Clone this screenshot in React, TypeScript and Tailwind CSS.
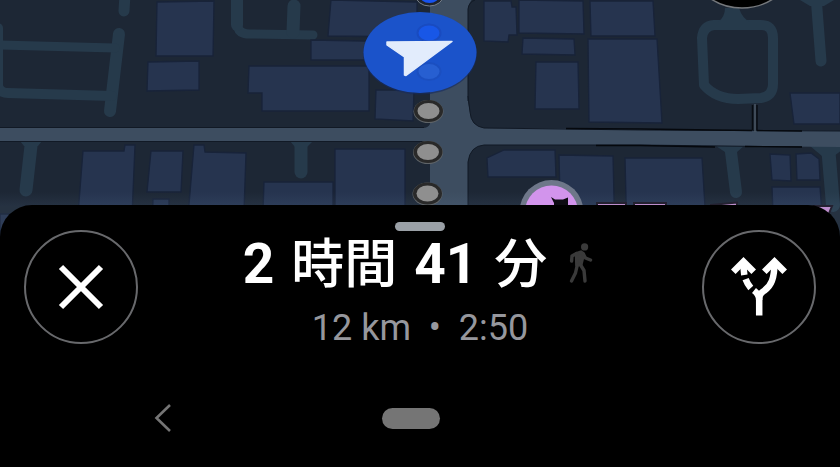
const buildings = [
    '157,2 214,1 213,56 156,56',
    '148,62 199,61 199,90 147,91',
    '83,151 124,151 125,145 135,145 131,240 76,240',
    '151,151 183,151 181,192 147,192',
    '153,199 169,199 169,240 152,240',
    '194,145 204,145 205,152 246,153 243,240 186,240',
    '0,214 40,214 40,240 0,240',
    '264,182 333,182 333,240 262,240',
    '335,149 405,149 405,240 335,240',
    '249,66 369,66 369,111 262,111 262,93 248,93',
    '331,0 417,2 417,37 328,36',
    '311,40 417,42 417,60 311,60',
    '376,90 414,90 413,121 375,119',
    '484,1 511,1 512,7 516,7 517,35 509,35 508,42 484,41',
    '519,0 583,1 584,34 519,33',
    '523,38 574,39 575,55 522,54',
    '536,62 578,62 579,109 535,109',
    '590,1 653,1 655,36 591,36',
    '588,39 657,39 662,123 589,122',
    '487,158 504,150 555,150 556,177 488,177',
    '559,155 613,156 615,240 561,240',
    '625,158 702,158 707,240 627,240',
    '790,93 840,93 840,124 794,124',
    '770,154 790,155 791,181 772,180',
    '796,154 811,153 819,159 820,180 797,180',
    '772,187 820,187 824,240 774,240',
];

const stops = [
    { cx: 428.5, cy: 111 },
    { cx: 428, cy: 152 },
    { cx: 427.5, cy: 193.5 },
];

function MapView() {
    return (
        <svg
            viewBox="0 0 840 240"
            preserveAspectRatio="xMidYMin slice"
            className="block h-[240px] w-full bg-[#1d2735]"
            role="img"
            aria-label="地図"
        >
            <defs>
                <linearGradient id="haze" x1="0" y1="0" x2="0" y2="1">
                    <stop offset="0" stopColor="#7390b5" stopOpacity="0" />
                    <stop offset="1" stopColor="#7390b5" stopOpacity="0.1" />
                </linearGradient>
            </defs>

            {/* minor roads */}
            <g fill="none" stroke="#263a4b" strokeWidth="11" strokeLinecap="round" strokeLinejoin="round">
                <path d="M125 -6 L124 11" />
                <path d="M119 34 L110 111" strokeWidth="12" />
                <path d="M-2 45 L115 48" strokeWidth="9" />
                <path d="M-2 28 L-2 86 Q0 93 8 93 L112 96" strokeWidth="10" />
                <path d="M32 137 L26 190" strokeWidth="13" />
                <path d="M238 -6 V27 Q239 34 250 34 L313 35" strokeWidth="9" />
                <path d="M237 -6 V25" strokeWidth="12" />
                <path d="M294 6 L293 32" strokeWidth="13" />
                <path d="M301 138 V172" strokeWidth="13" />
                <path d="M714 25 H761 Q773 25 773 38 L773 84 Q773 96 761 98 L738 99 Q716 99 704 85 L702 38 Q703 26 714 25 Z" strokeWidth="10" />
                <path d="M816 -4 L821 61" />
                <path d="M730 144 L736 192" strokeWidth="12" />
                <path d="M828 146 L833 205" strokeWidth="14" />
            </g>
            <path d="M725 8 H739 Q742 18 750 22 H718 Q725 17 725 8 Z" fill="#263a4b" />
            <path d="M20 141 H42 L38 146 H24 Z M290 141 H313 L307 147 H295 Z M716 146 H744 L737 152 H725 Z M810 146 H842 V150 L834 156 H822 Z M800 0 H834 L824 6 H810 Z" fill="#263a4b" />

            {/* main roads */}
            <path
                d="M430 -5 V124 Q428 128 423 128 H0 V141 H424 Q430 142 430 147 V240 H468 V161 Q471 146 484 145 L600 145 L840 147 V131 L640 129 L484 128 Q471 126 470 112 L468 102 V9 Q468 3 476 -5 Z"
                fill="#3d4d60"
            />
            <path
                d="M0 127.5 H424 M0 141.5 H424 M468 101 V9 Q469 2 475 0 M468 96 L470 112 Q471 126 484 128 L640 130 L840 131 M468 240 V162 Q470 146 484 145 L640 145 L802 147"
                fill="none"
                stroke="#111925"
                strokeWidth="1"
            />
            <path d="M566 128.5 L640 129 L752 130.5 M757 130.5 L802 131 M596 145.5 H640 L715 147 M745 146.5 L802 147" fill="none" stroke="#05080d" strokeWidth="1.3" />
            <path d="M752.5 105 V130 M757 105 V130" stroke="#080c12" strokeWidth="1.5" />
            <path d="M755 104 V132" stroke="#4b5866" strokeWidth="1.5" />

            <g fill="#26344f" stroke="#182339" strokeWidth="1.3">
                {buildings.map((points) => (
                    <polygon key={points} points={points} />
                ))}
            </g>

            <rect x="0" y="192" width="840" height="14" fill="url(#haze)" />
            <rect x="0" y="206" width="840" height="34" fill="#7390b5" opacity="0.1" />

            {/* shops along the street */}
            <g fill="#bd8dcc" stroke="#242130" strokeWidth="2">
                <path d="M597 203 H626 V240 H597 Z" />
                <path d="M634 203 H666 V240 H634 Z" />
                <path d="M711 205 L737 202.5 V240 H711 Z" />
                <path d="M815 206 H832 L828 216 Z" />
            </g>
            <circle cx="551.5" cy="212" r="32" fill="#6e7789" />
            <circle cx="551.5" cy="212" r="26.5" fill="#d294ec" />
            <path d="M551 197 L555 199.5 H563 L568 197.5 V240 H554 V203 Z" fill="#0d0b12" />

            {/* route dots */}
            {stops.map((stop) => (
                <g key={stop.cy}>
                    <ellipse cx={stop.cx} cy={stop.cy + 0.6} rx="15" ry="11.5" fill="#5f6468" />
                    <ellipse cx={stop.cx} cy={stop.cy} rx="14.5" ry="11" fill="#292929" />
                    <ellipse cx={stop.cx} cy={stop.cy} rx="11" ry="8" fill="#8f8f8f" />
                </g>
            ))}
            <ellipse cx="429.5" cy="-5" rx="14" ry="11" fill="#20242d" stroke="#78818b" strokeWidth="1" />
            <ellipse cx="429.5" cy="-5" rx="10" ry="8" fill="#1753ef" />

            <ellipse cx="420" cy="53.5" rx="57" ry="41" fill="#152b60" opacity="0.6" />
            <ellipse cx="420" cy="52.5" rx="56.5" ry="40.5" fill="#1b53ca" />
            <ellipse cx="429" cy="33" rx="11.5" ry="8.5" fill="#1857e7" stroke="#194bc0" strokeWidth="2" />
            <ellipse cx="429" cy="71.5" rx="11.5" ry="8.5" fill="#275fd1" stroke="#1b4fc0" strokeWidth="2" />
            <path
                d="M387 42 L452 41.5 L406 75.5 L404.5 75 L404.5 57 L387 45 Z"
                fill="#e2ecfc"
                stroke="#e2ecfc"
                strokeWidth="1.5"
                strokeLinejoin="round"
            />

            <circle cx="742" cy="-49" r="57" fill="#000" stroke="#75787c" strokeWidth="1.5" />
        </svg>
    );
}

function CloseIcon() {
    return (
        <svg viewBox="0 0 48 48" className="h-12 w-12" fill="none" stroke="currentColor" strokeWidth="6" aria-hidden="true">
            <path d="M4 4 L44 44 M44 4 L4 44" />
        </svg>
    );
}

function RoutesIcon() {
    return (
        <svg viewBox="0 0 60 64" className="h-16 w-[60px]" fill="none" stroke="currentColor" strokeWidth="6.5" aria-hidden="true">
            <path d="M30.2 60.5 V44 Q30.2 38.5 35.5 35.5 C42 31 45.5 24 45.5 7" />
            <path d="M35.3 16.7 L45.5 6.5 L55.7 16.7" />
            <path d="M4.3 16.7 L14.5 6.5 L24.7 16.7" />
            <path d="M14.5 7 Q14.5 14 15.3 20" />
            <path d="M16.6 24.2 Q18.3 29 21.8 33" />
            <path d="M25 35.5 Q30.2 39.5 30.2 45" />
        </svg>
    );
}

function WalkIcon() {
    return (
        <svg viewBox="0 0 30 44" className="h-11 w-[30px] text-[#3a3a3a]" fill="none" stroke="currentColor" strokeWidth="3.4" strokeLinecap="round" strokeLinejoin="round" aria-hidden="true">
            <circle cx="17.6" cy="3.9" r="3.6" fill="currentColor" stroke="none" />
            <path d="M9.5 10.5 L14 9 L16.5 11 L14 21 L9.8 22 Z" fill="currentColor" />
            <path d="M9.5 10.5 L5 13 L4.6 18" />
            <path d="M16 10.5 L18.5 15 L23.5 17" />
            <path d="M10.3 22 L8.5 30 L4.5 38" />
            <path d="M13 21 L17 27.5 L18 38" />
        </svg>
    );
}

const roundButton =
    'mt-2 flex h-[114px] w-[114px] shrink-0 items-center justify-center rounded-full border-2 border-[#68696c] text-white';

export default function App() {
    return (
        <div className="min-h-screen bg-black font-['Roboto','Noto_Sans_CJK_JP',sans-serif]" lang="ja">
            <MapView />

            <main className="relative -mt-[35px] rounded-t-[32px] bg-black">
                <section className="flex items-start justify-between px-6 pt-[17px]">
                    <button type="button" aria-label="閉じる" className={roundButton}>
                        <CloseIcon />
                    </button>

                    <div className="flex flex-col items-center">
                        <div className="h-[9px] w-[50px] rounded-full bg-[#9aa0a6]" />
                        <div className="flex items-center gap-5">
                            <h1 className="flex items-baseline gap-[17px] text-[55px] leading-[66px] font-bold whitespace-nowrap text-white">
                                <span>2</span>
                                <span className="text-[53px] font-medium">時間</span>
                                <span>41</span>
                                <span className="text-[53px] font-medium">分</span>
                            </h1>
                            <WalkIcon />
                        </div>
                        <p className="text-[36px] leading-[60px] whitespace-pre text-[#96979d]">12 km  •  2:50</p>
                    </div>

                    <button type="button" aria-label="別のルート" className={roundButton}>
                        <RoutesIcon />
                    </button>
                </section>

                <nav className="mt-5 grid h-20 grid-cols-3 items-center pr-[18px]" aria-label="システム">
                    <button type="button" aria-label="戻る" className="ml-[52px] justify-self-center text-[#757575]">
                        <svg viewBox="0 0 18 30" className="h-[30px] w-[18px]" fill="none" stroke="currentColor" strokeWidth="2.6" aria-hidden="true">
                            <path d="M16 2 L2.5 15 L16 28" />
                        </svg>
                    </button>
                    <button type="button" aria-label="ホーム" className="h-[21px] w-[58px] justify-self-center rounded-full bg-[#757575]" />
                </nav>
            </main>
        </div>
    );
}
